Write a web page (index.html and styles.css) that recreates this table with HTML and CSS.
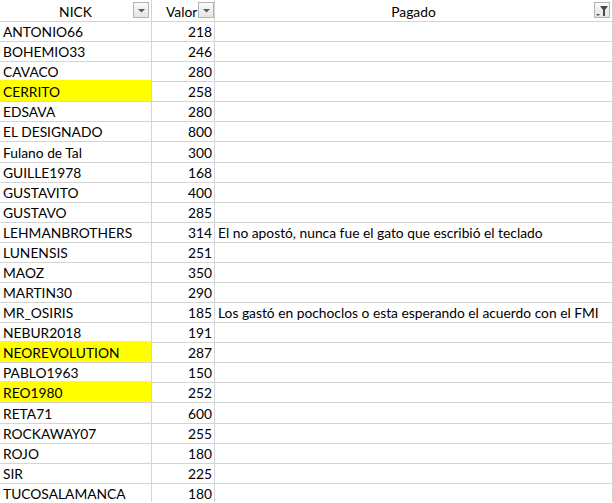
FILE: index.html
```html
<!DOCTYPE html>
<html>
<head>
    <meta charset="utf-8">
    <link rel="stylesheet" href="styles.css">
</head>
<body>
    <div class="sheet">
        <div class="row head">
            <div class="cell nick">NICK<span class="filter"><svg width="9" height="5" viewBox="0 0 9 5"><path d="M1 1h7l-3.5 3.5z" fill="#5a5a5a"/></svg></span></div>
            <div class="cell valor"><span class="clip">Valor</span><span class="filter"><svg width="9" height="5" viewBox="0 0 9 5"><path d="M1 1h7l-3.5 3.5z" fill="#5a5a5a"/></svg></span></div>
            <div class="cell pagado">Pagado<span class="filter"><svg width="14" height="12" viewBox="0 0 14 12"><path d="M5 1h8l-3 4v6h-2v-6z" fill="#4a4a4a"/><path d="M1 9h4l-2 2z" fill="#4a4a4a"/></svg></span></div>
        </div>

        <div class="row"><div class="cell">ANTONIO66</div><div class="cell num">218</div><div class="cell"></div></div>
        <div class="row"><div class="cell">BOHEMIO33</div><div class="cell num">246</div><div class="cell"></div></div>
        <div class="row"><div class="cell">CAVACO</div><div class="cell num">280</div><div class="cell"></div></div>
        <div class="row"><div class="cell mark">CERRITO</div><div class="cell num">258</div><div class="cell"></div></div>
        <div class="row"><div class="cell">EDSAVA</div><div class="cell num">280</div><div class="cell"></div></div>
        <div class="row"><div class="cell">EL DESIGNADO</div><div class="cell num">800</div><div class="cell"></div></div>
        <div class="row"><div class="cell">Fulano de Tal</div><div class="cell num">300</div><div class="cell"></div></div>
        <div class="row"><div class="cell">GUILLE1978</div><div class="cell num">168</div><div class="cell"></div></div>
        <div class="row"><div class="cell">GUSTAVITO</div><div class="cell num">400</div><div class="cell"></div></div>
        <div class="row"><div class="cell">GUSTAVO</div><div class="cell num">285</div><div class="cell"></div></div>
        <div class="row"><div class="cell">LEHMANBROTHERS</div><div class="cell num">314</div><div class="cell">El no apostó, nunca fue el gato que escribió el teclado</div></div>
        <div class="row"><div class="cell">LUNENSIS</div><div class="cell num">251</div><div class="cell"></div></div>
        <div class="row"><div class="cell">MAOZ</div><div class="cell num">350</div><div class="cell"></div></div>
        <div class="row"><div class="cell">MARTIN30</div><div class="cell num">290</div><div class="cell"></div></div>
        <div class="row"><div class="cell">MR_OSIRIS</div><div class="cell num">185</div><div class="cell">Los gastó en pochoclos o esta esperando el acuerdo con el FMI</div></div>
        <div class="row"><div class="cell">NEBUR2018</div><div class="cell num">191</div><div class="cell"></div></div>
        <div class="row"><div class="cell mark">NEOREVOLUTION</div><div class="cell num">287</div><div class="cell"></div></div>
        <div class="row"><div class="cell">PABLO1963</div><div class="cell num">150</div><div class="cell"></div></div>
        <div class="row"><div class="cell mark">REO1980</div><div class="cell num">252</div><div class="cell"></div></div>
        <div class="row"><div class="cell">RETA71</div><div class="cell num">600</div><div class="cell"></div></div>
        <div class="row"><div class="cell">ROCKAWAY07</div><div class="cell num">255</div><div class="cell"></div></div>
        <div class="row"><div class="cell">ROJO</div><div class="cell num">180</div><div class="cell"></div></div>
        <div class="row"><div class="cell">SIR</div><div class="cell num">225</div><div class="cell"></div></div>
        <div class="row"><div class="cell">TUCOSALAMANCA</div><div class="cell num">180</div><div class="cell"></div></div>
    </div>
</body>
</html>
```

FILE: styles.css
```css
body {
    margin: 0;
    background: #fff;
    font-family: Lato, "Open Sans", sans-serif;
    font-size: 13.8px;
    color: #000;
    overflow: hidden;
}

.sheet {
    width: 613px;
}

.row {
    display: grid;
    grid-template-columns: 152px 63px 398px;
    height: 20.08px;
}

.cell {
    position: relative;
    border-right: 1px solid #d4d4d4;
    border-bottom: 1px solid #d4d4d4;
    padding: 2px 3px 0;
    line-height: 19px;
    white-space: nowrap;
    overflow: visible;
}

.row .cell:last-child {
    overflow: hidden;
}

.num {
    text-align: right;
    padding-right: 2px;
}

.mark {
    background: #ffff00;
}

/* header row */
.head .cell {
    text-align: center;
}

.head .valor {
    text-align: left;
    padding-left: 14px;
    overflow: hidden;
}

.clip {
    display: inline-block;
}

.filter {
    position: absolute;
    right: 2px;
    top: 2px;
    width: 14px;
    height: 14px;
    border: 1px solid #b3b3b3;
    background: linear-gradient(#fbfbfb, #e4e4e4);
    display: flex;
    align-items: center;
    justify-content: center;
}

.head .valor .filter {
    right: 0;
}

.head .pagado svg {
    margin-top: 1px;
}
```
